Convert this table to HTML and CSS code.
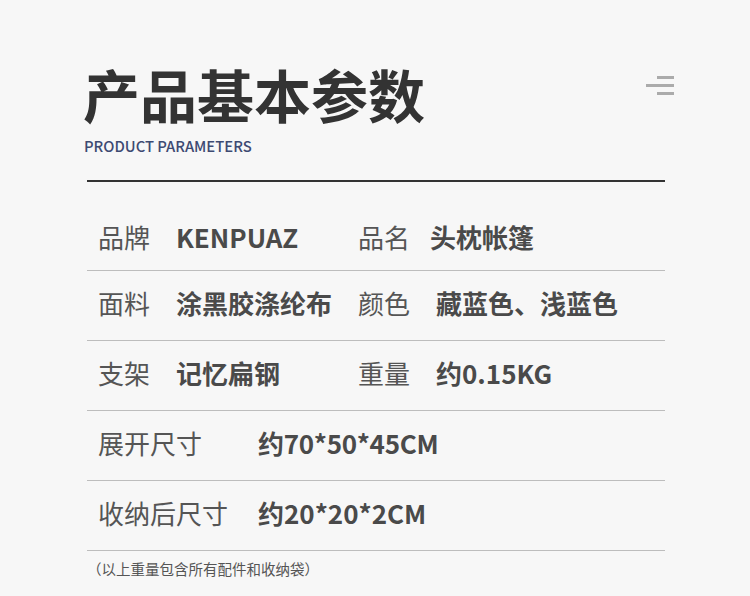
FILE: index.html
```html
<!DOCTYPE html>
<html lang="zh-CN">
  <head>
    <meta charset="UTF-8" />
    <meta name="viewport" content="width=device-width, initial-scale=1.0" />
    <title>产品基本参数</title>
    <link rel="stylesheet" href="styles.css">
  </head>
  <body>
    <div class="page">
      <div class="header">
        <div class="titles">
          <h1 class="title">产品基本参数</h1>
          <p class="subtitle">PRODUCT PARAMETERS</p>
        </div>
        <svg class="menuIcon" width="28" height="20" viewBox="0 0 28 20">
          <rect x="11" y="0" width="17" height="3" fill="#ababab" />
          <rect x="0" y="8" width="28" height="3" fill="#ababab" />
          <rect x="11" y="16" width="17" height="3" fill="#ababab" />
        </svg>
      </div>
      <div class="rule"></div>
      <div class="params">
        <div class="row first">
          <span class="label">品牌</span>
          <span class="value">KENPUAZ</span>
          <span class="label second">品名</span>
          <span class="value">头枕帐篷</span>
        </div>
        <div class="row">
          <span class="label">面料</span>
          <span class="value">涂黑胶涤纶布</span>
          <span class="label second">颜色</span>
          <span class="value shifted">藏蓝色、浅蓝色</span>
        </div>
        <div class="row">
          <span class="label">支架</span>
          <span class="value">记忆扁钢</span>
          <span class="label second">重量</span>
          <span class="value shifted">约0.15KG</span>
        </div>
        <div class="row">
          <span class="label wide">展开尺寸</span>
          <span class="value tight">约70*50*45CM</span>
        </div>
        <div class="row">
          <span class="label wide">收纳后尺寸</span>
          <span class="value">约20*20*2CM</span>
        </div>
      </div>
      <p class="note">（以上重量包含所有配件和收纳袋）</p>
    </div>
  </body>
</html>
```

FILE: styles.css
```css
body {
  margin: 0;
  background: #f7f7f7;
  font-family: "Noto Sans CJK SC", "Noto Sans", sans-serif;
  color: #333;
}

.page {
  padding: 60px 85px 0 87px;
}

.header {
  display: flex;
  justify-content: space-between;
  align-items: flex-start;
}

.title {
  margin: 0 0 0 -4px;
  font-size: 57px;
  line-height: 66px;
  font-weight: 700;
  color: #333;
}

.subtitle {
  margin: 10px 0 0 -3px;
  font-size: 14.8px;
  line-height: 20px;
  font-weight: 500;
  color: #3d4a72;
}

.menuIcon {
  margin-top: 16px;
  margin-right: -9px;
}

.rule {
  margin-top: 24px;
  height: 2px;
  background: #333;
}

.params {
  margin-top: 27px;
}

.row {
  display: flex;
  align-items: center;
  box-sizing: border-box;
  height: 70px;
  padding: 0 0 6px 11px;
  border-bottom: 1px solid #bdbdbd;
}

.row.first {
  height: 62px;
}

.label {
  flex: none;
  width: 78px;
  font-size: 26px;
  color: #555;
}

.label.second {
  width: 72px;
}

.label.wide {
  width: 160px;
}

.value {
  flex: none;
  width: 182px;
  font-size: 26px;
  font-weight: 700;
  color: #4a4a4a;
  white-space: nowrap;
}

.value.shifted {
  padding-left: 6px;
}

.value.tight {
  letter-spacing: -0.3px;
}

.note {
  margin: 7px 0 0 0;
  font-size: 14.5px;
  color: #555;
}
```
